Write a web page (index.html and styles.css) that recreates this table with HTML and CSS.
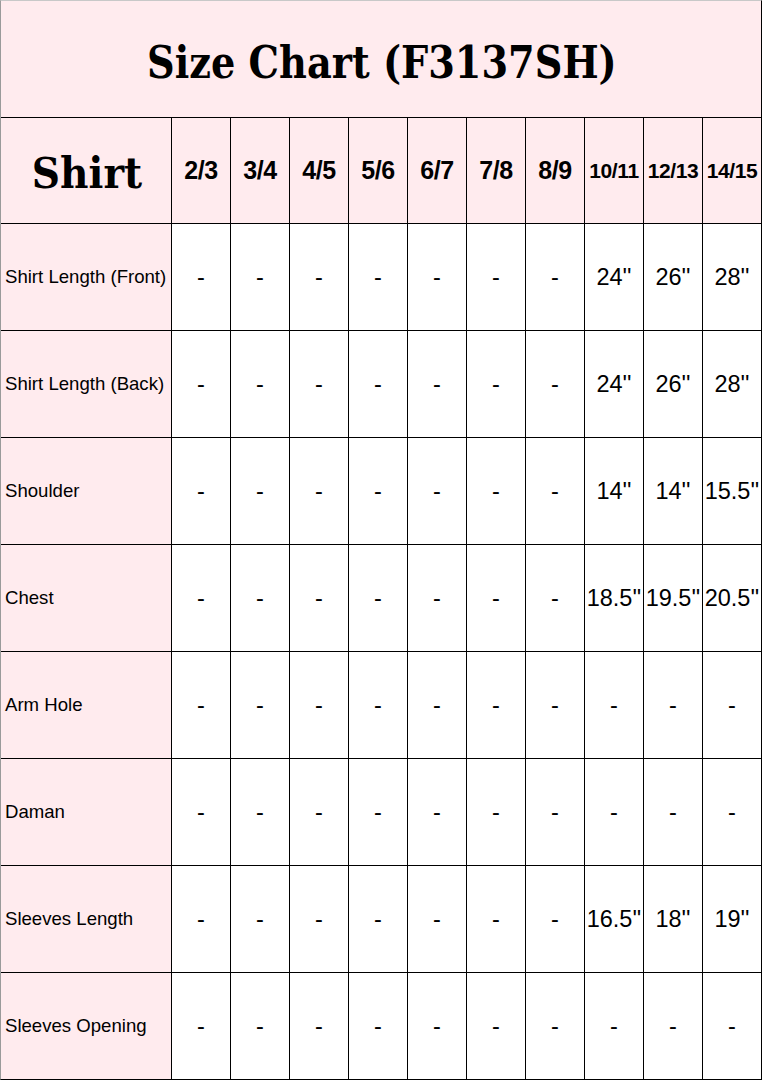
FILE: index.html
```html
<!DOCTYPE html>
<html>
<head>
<meta charset="utf-8">
<link rel="stylesheet" href="styles.css">
</head>
<body>
<div class="chart">
  <div class="cell title"><span class="squeeze">Size Chart (F3137SH)</span></div>

  <div class="cell pink head-label">Shirt</div>
  <div class="cell pink size">2/3</div>
  <div class="cell pink size">3/4</div>
  <div class="cell pink size">4/5</div>
  <div class="cell pink size">5/6</div>
  <div class="cell pink size">6/7</div>
  <div class="cell pink size">7/8</div>
  <div class="cell pink size">8/9</div>
  <div class="cell pink size small">10/11</div>
  <div class="cell pink size small">12/13</div>
  <div class="cell pink size small">14/15</div>

  <div class="cell pink label">Shirt Length (Front)</div>
  <div class="cell val">-</div><div class="cell val">-</div><div class="cell val">-</div><div class="cell val">-</div><div class="cell val">-</div><div class="cell val">-</div><div class="cell val">-</div>
  <div class="cell val">24''</div><div class="cell val">26''</div><div class="cell val">28''</div>

  <div class="cell pink label">Shirt Length (Back)</div>
  <div class="cell val">-</div><div class="cell val">-</div><div class="cell val">-</div><div class="cell val">-</div><div class="cell val">-</div><div class="cell val">-</div><div class="cell val">-</div>
  <div class="cell val">24''</div><div class="cell val">26''</div><div class="cell val">28''</div>

  <div class="cell pink label">Shoulder</div>
  <div class="cell val">-</div><div class="cell val">-</div><div class="cell val">-</div><div class="cell val">-</div><div class="cell val">-</div><div class="cell val">-</div><div class="cell val">-</div>
  <div class="cell val">14''</div><div class="cell val">14''</div><div class="cell val">15.5''</div>

  <div class="cell pink label">Chest</div>
  <div class="cell val">-</div><div class="cell val">-</div><div class="cell val">-</div><div class="cell val">-</div><div class="cell val">-</div><div class="cell val">-</div><div class="cell val">-</div>
  <div class="cell val">18.5''</div><div class="cell val">19.5''</div><div class="cell val">20.5''</div>

  <div class="cell pink label">Arm Hole</div>
  <div class="cell val">-</div><div class="cell val">-</div><div class="cell val">-</div><div class="cell val">-</div><div class="cell val">-</div><div class="cell val">-</div><div class="cell val">-</div>
  <div class="cell val">-</div><div class="cell val">-</div><div class="cell val">-</div>

  <div class="cell pink label">Daman</div>
  <div class="cell val">-</div><div class="cell val">-</div><div class="cell val">-</div><div class="cell val">-</div><div class="cell val">-</div><div class="cell val">-</div><div class="cell val">-</div>
  <div class="cell val">-</div><div class="cell val">-</div><div class="cell val">-</div>

  <div class="cell pink label">Sleeves Length</div>
  <div class="cell val">-</div><div class="cell val">-</div><div class="cell val">-</div><div class="cell val">-</div><div class="cell val">-</div><div class="cell val">-</div><div class="cell val">-</div>
  <div class="cell val">16.5''</div><div class="cell val">18''</div><div class="cell val">19''</div>

  <div class="cell pink label">Sleeves Opening</div>
  <div class="cell val">-</div><div class="cell val">-</div><div class="cell val">-</div><div class="cell val">-</div><div class="cell val">-</div><div class="cell val">-</div><div class="cell val">-</div>
  <div class="cell val">-</div><div class="cell val">-</div><div class="cell val">-</div>
</div>
</body>
</html>
```

FILE: styles.css
```css
html, body {
  margin: 0;
  padding: 0;
  background: #ffffff;
}

.chart {
  width: 762px;
  height: 1080px;
  box-sizing: border-box;
  display: grid;
  grid-template-columns: 170px repeat(10, 58px);
  grid-template-rows: 116px 105px repeat(8, 106px);
  gap: 1px;
  background: #000000;
  border-top: 1px solid #c8c8c8;
  border-left: 1px solid #9a9a9a;
  border-right: 1px solid #000000;
  border-bottom: 1px solid #000000;
  font-family: "Liberation Sans", Arial, sans-serif;
  color: #000000;
}

.cell {
  background: #ffffff;
  display: flex;
  align-items: center;
  justify-content: center;
  white-space: nowrap;
  overflow: visible;
}

.pink {
  background: #ffebee;
}

.title {
  grid-column: 1 / -1;
  background: #ffebee;
  font-family: "DejaVu Serif", "Liberation Serif", serif;
  font-stretch: condensed;
  font-weight: bold;
  font-size: 44px;
  padding-top: 6px;
  padding-left: 1px;
}

.squeeze {
  display: inline-block;
  transform: scaleX(0.967);
}

.head-label {
  font-family: "DejaVu Serif", "Liberation Serif", serif;
  font-stretch: condensed;
  font-weight: bold;
  font-size: 43.5px;
  padding-top: 4px;
  padding-left: 2px;
}

.size {
  font-weight: bold;
  font-size: 25px;
  letter-spacing: -0.4px;
}

.size.small {
  font-size: 21px;
  letter-spacing: -0.4px;
}

.label {
  justify-content: flex-start;
  padding-left: 4px;
  font-size: 18.6px;
}

.val {
  font-size: 23.5px;
}
```
